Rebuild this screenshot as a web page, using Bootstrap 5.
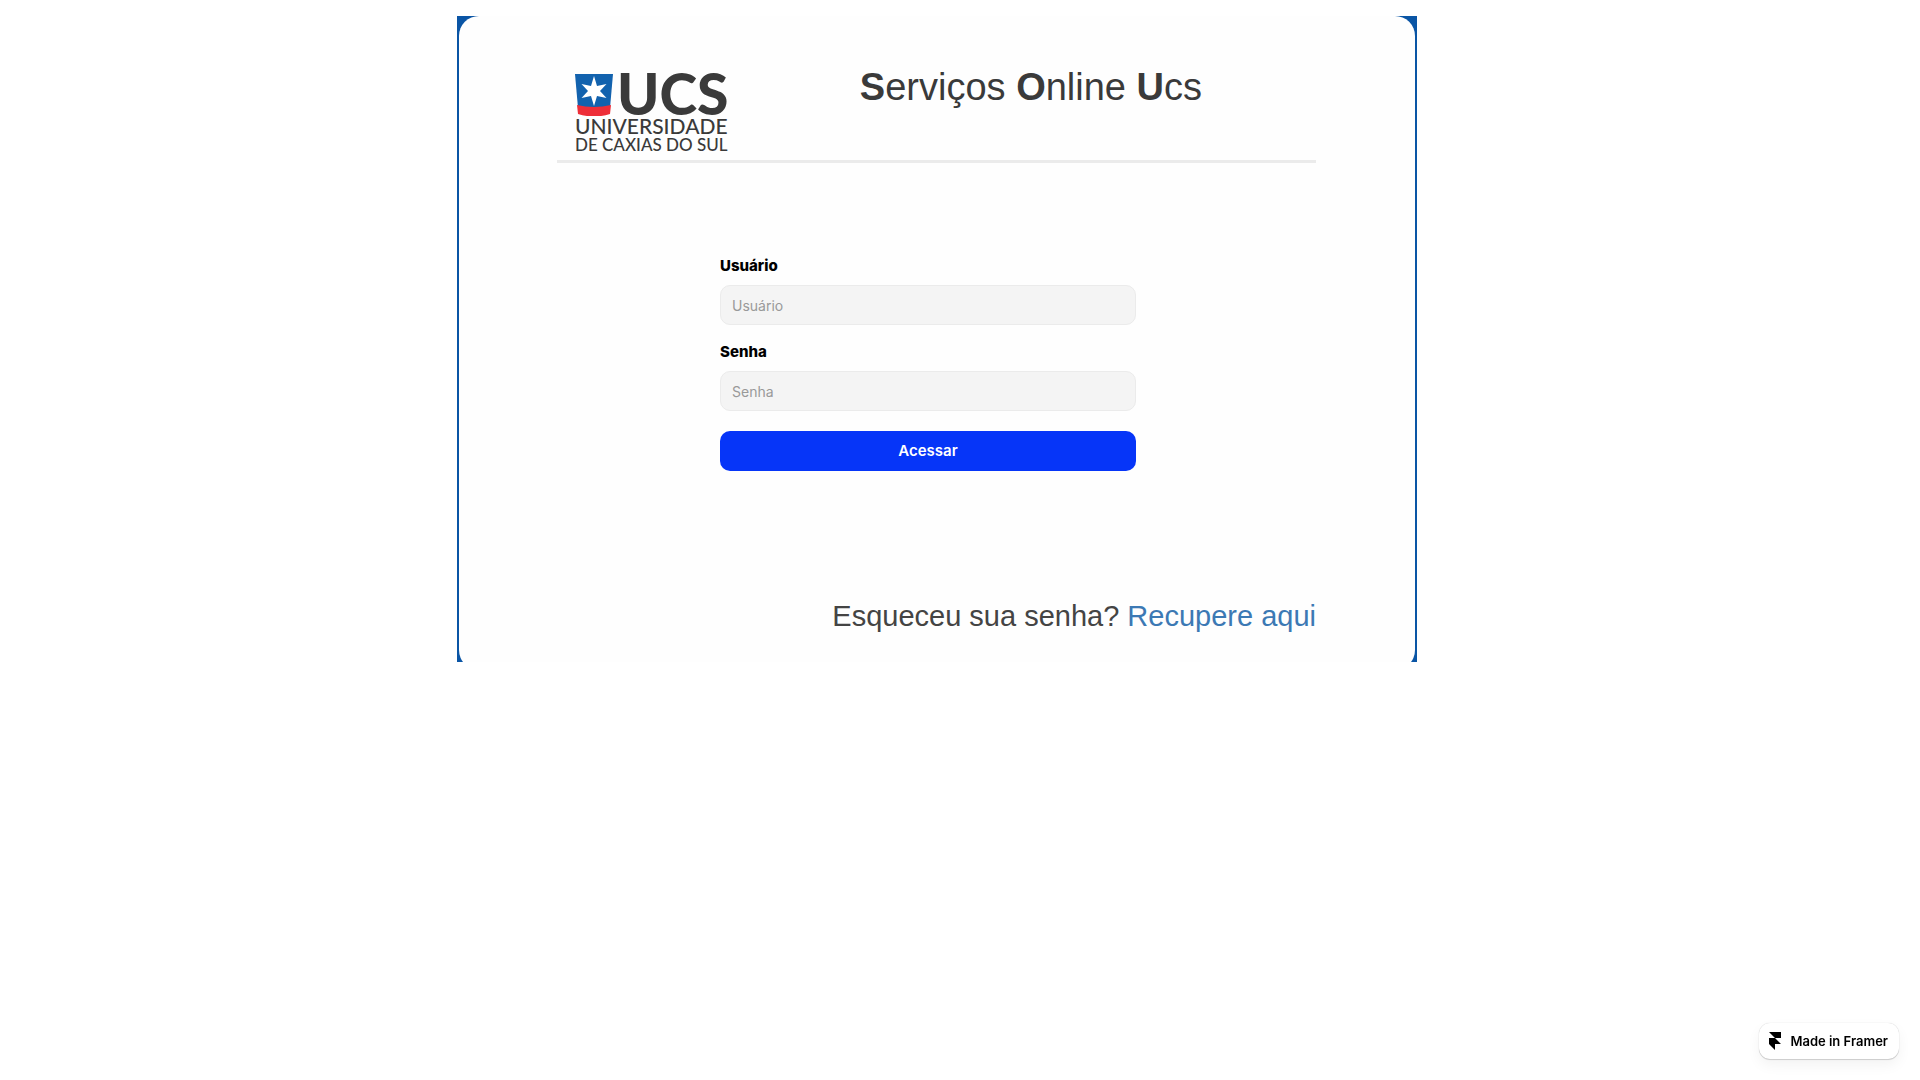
<!DOCTYPE html>
<html lang="pt-BR">
<head>
<meta charset="utf-8">
<meta name="viewport" content="width=device-width, initial-scale=1">
<title>Serviços Online UCS</title>
<link href="https://cdn.jsdelivr.net/npm/bootstrap@5.3.0/dist/css/bootstrap.min.css" rel="stylesheet">
<style>
  body { font-family: Inter, "Liberation Sans", sans-serif; font-size: 14px; line-height: 20px; color: #000; background: #fff; }
  .page { padding: 16px 46px 16px 0; }
  .panel-frame { width: 100%; max-width: 960px; background: #0a55a5; overflow: hidden; }
  .panel-sheet { margin: 0 2px -8px 2px; padding: 50px 99px 36px 98px; border-radius: 20px; background: #fefefe; }
  .masthead { height: 97px; border-bottom: 3px solid #ebebeb; }
  .brand { margin-left: 18px; padding-top: 4px; color: #3a3a3a; font-family: Lato, sans-serif; white-space: nowrap; }
  .brand-name { font-size: 57px; line-height: 46px; font-weight: 900; }
  .brand-line { font-size: 21px; line-height: 20px; font-weight: 500; }
  .brand-sub { font-size: 17px; line-height: 17px; font-weight: 500; }
  .site-title { margin-right: 114px; font-family: "Liberation Sans", sans-serif; font-size: 38px; line-height: 42px; color: #3a3a3a; }
  .login { width: 100%; max-width: 416px; margin: 92px auto 0; }
  .login-wrap { padding-right: 17px; }
  .login label { font-size: 15px; line-height: 22px; font-weight: 800; margin-bottom: 8px; }
  .login .form-control { height: 40px; padding: 0 11px; border: 1px solid #ebebeb; border-radius: 10px; background: #f4f4f4; font-size: 14px; }
  .login .form-control::placeholder { color: #999; }
  .login .btn { height: 40px; margin-top: 20px; padding: 0; border: 0; border-radius: 10px; background: #0635f8; font-size: 15px; line-height: 20px; font-weight: 600; }
  .recover { margin-top: 127px; font-family: "Liberation Sans", sans-serif; font-size: 29px; line-height: 36px; color: #444; }
  .recover a { color: #3c79b4; }
  .framer { right: 21px; bottom: 21px; height: 36px; padding: 0 11px 0 10px; gap: 9px; border-radius: 11px; background: #fff; color: #000; font-size: 13px; font-weight: 600; box-shadow: 0 0 1px rgba(0,0,0,.25), 0 1px 1px rgba(0,0,0,.16), 0 6px 14px rgba(0,0,0,.05); }
</style>
<script src="https://cdn.jsdelivr.net/npm/bootstrap@5.3.0/dist/js/bootstrap.bundle.min.js"></script>
</head>
<body>
<main class="page d-flex justify-content-center">
  <section class="panel-frame">
    <div class="panel-sheet">
      <header class="masthead d-flex justify-content-between align-items-start">
        <div class="brand">
          <div class="d-flex">
            <svg width="38" height="46" viewBox="0 0 38 46" aria-hidden="true">
              <path fill="#1262ae" d="M0 4H38L35 38Q19 42 3 38Z"/>
              <path fill="#ee2e38" d="M2 35Q19 39 36 35L35 44Q19 49 3 44Z"/>
              <path fill="#fff" d="M19 6L22 16L31.500 14L25 21L31.500 28L22 26L19 36L16 26L6.500 28L13 21L6.500 14L16 16Z"/>
            </svg>
            <span class="brand-name ms-1">UCS</span>
          </div>
          <div class="brand-line">UNIVERSIDADE</div>
          <div class="brand-sub">DE CAXIAS DO SUL</div>
        </div>
        <h1 class="site-title mb-0 fw-normal"><b>S</b>erviços <b>O</b>nline <b>U</b>cs</h1>
      </header>
      <div class="login-wrap">
        <form class="login">
          <label class="d-block" for="user">Usuário</label>
          <input class="form-control" id="user" type="text" placeholder="Usuário">
          <label class="d-block mt-3" for="password">Senha</label>
          <input class="form-control" id="password" type="password" placeholder="Senha">
          <button class="btn btn-primary w-100 d-block" type="submit">Acessar</button>
        </form>
      </div>
      <p class="recover mb-0 text-end">Esqueceu sua senha? <a class="text-decoration-none" href="#">Recupere aqui</a></p>
    </div>
  </section>
</main>
<a class="framer position-fixed d-flex align-items-center text-decoration-none" href="#">
  <svg width="12" height="18" viewBox="0 0 12 18" aria-hidden="true"><path d="M0 0H12V6H6ZM0 6H6L12 12H6V18L0 12Z"/></svg>
  <span>Made in Framer</span>
</a>
</body>
</html>
